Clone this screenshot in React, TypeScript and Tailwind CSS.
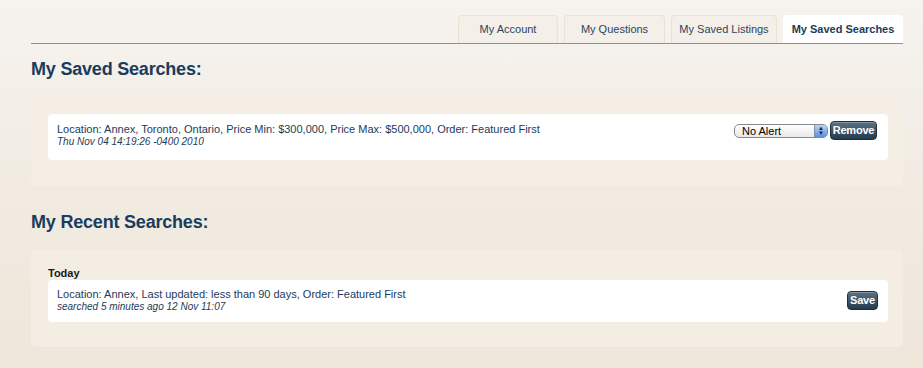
import React from "react"

const tabs = ["My Account", "My Questions", "My Saved Listings", "My Saved Searches"]
const tabWidths = ["w-[100px]", "w-[101px]", "w-[106px]", "w-[120px]"]

function DarkButton({ label, className }: { label: string; className?: string }) {
  return (
    <button
      className={`flex h-[19px] items-center justify-center rounded-[4px] border border-[#1e2f3d] bg-gradient-to-b from-[#5b7387] to-[#263b4c] text-[11px] font-bold leading-none tracking-[-0.2px] text-white shadow-[inset_0_1px_0_rgba(255,255,255,0.25)] ${className ?? ""}`}
    >
      {label}
    </button>
  )
}

function AlertSelect() {
  return (
    <div className="flex h-[14px] w-[94px] overflow-hidden rounded-[5px] border border-[#8a8a8a] bg-gradient-to-b from-white to-[#e9e9e9] text-[11px] leading-none text-black">
      <span className="flex-1 pl-[7px] pt-[1px]">No Alert</span>
      <span className="flex w-[13px] flex-col items-center justify-center border-l border-[#7b8fb4] bg-gradient-to-b from-[#bcd4f5] to-[#5b8fdc] text-[6px] leading-[5px] text-[#223]">
        <span>▲</span>
        <span>▼</span>
      </span>
    </div>
  )
}

export default function App() {
  return (
    <div
      className="min-h-[368px] w-full bg-gradient-to-b from-[#f6f3ef] via-[#f1ebe2] to-[#eee6d9] pl-[31px] pr-[20px] pt-[15px] text-[#1d3b5a]"
      style={{ fontFamily: '"Liberation Sans", Arial, sans-serif' }}
    >
      <div className="flex justify-end gap-[6px] border-b border-[#a88a6c]">
        {tabs.map((t, i) => {
          const active = i === tabs.length - 1
          return (
            <div
              key={t}
              className={`flex h-[28px] items-center justify-center rounded-t-[4px] text-[11px] ${tabWidths[i]} ${
                active
                  ? "bg-white font-bold text-[#1d3b5a]"
                  : "border border-b-0 border-[#ebe2d6] bg-[#f4efe8] text-[#2b4560]"
              }`}
            >
              {t}
            </div>
          )
        })}
      </div>

      <h2 className="mt-[14px] text-[18px] font-bold leading-[22px] tracking-[-0.2px] text-[#1a3c5d]">
        My Saved Searches:
      </h2>

      <div className="mt-[17px] rounded-[4px] bg-[#f4eee5] pb-[26px] pl-[17px] pr-[15px] pt-[17px]">
        <div className="flex items-start justify-between rounded-[4px] bg-white pb-[12px] pl-[9px] pr-[11px] pt-[9px]">
          <div>
            <div className="text-[11px] leading-[13px]">
              Location: Annex, Toronto, Ontario, Price Min: $300,000, Price Max: $500,000, Order: Featured First
            </div>
            <div className="text-[10px] italic leading-[12px]">Thu Nov 04 14:19:26 -0400 2010</div>
          </div>
          <div className="mt-[-2px] flex items-center gap-[2px]">
            <AlertSelect />
            <DarkButton label="Remove" className="w-[47px]" />
          </div>
        </div>
      </div>

      <h2 className="mt-[25px] text-[18px] font-bold leading-[22px] tracking-[-0.2px] text-[#1a3c5d]">
        My Recent Searches:
      </h2>

      <div className="mt-[17px] rounded-[4px] bg-[#f3ede3] pb-[25px] pl-[17px] pr-[15px] pt-[16px]">
        <div className="text-[11px] font-bold leading-[14px] text-[#1a1a1a]">Today</div>
        <div className="flex items-center justify-between rounded-[4px] bg-white pb-[9px] pl-[9px] pr-[10px] pt-[8px]">
          <div>
            <div className="text-[11px] leading-[13px]">
              Location: Annex, Last updated: less than 90 days, Order: Featured First
            </div>
            <div className="text-[10px] italic leading-[12px]">searched 5 minutes ago 12 Nov 11:07</div>
          </div>
          <DarkButton label="Save" className="w-[31px]" />
        </div>
      </div>
    </div>
  )
}
